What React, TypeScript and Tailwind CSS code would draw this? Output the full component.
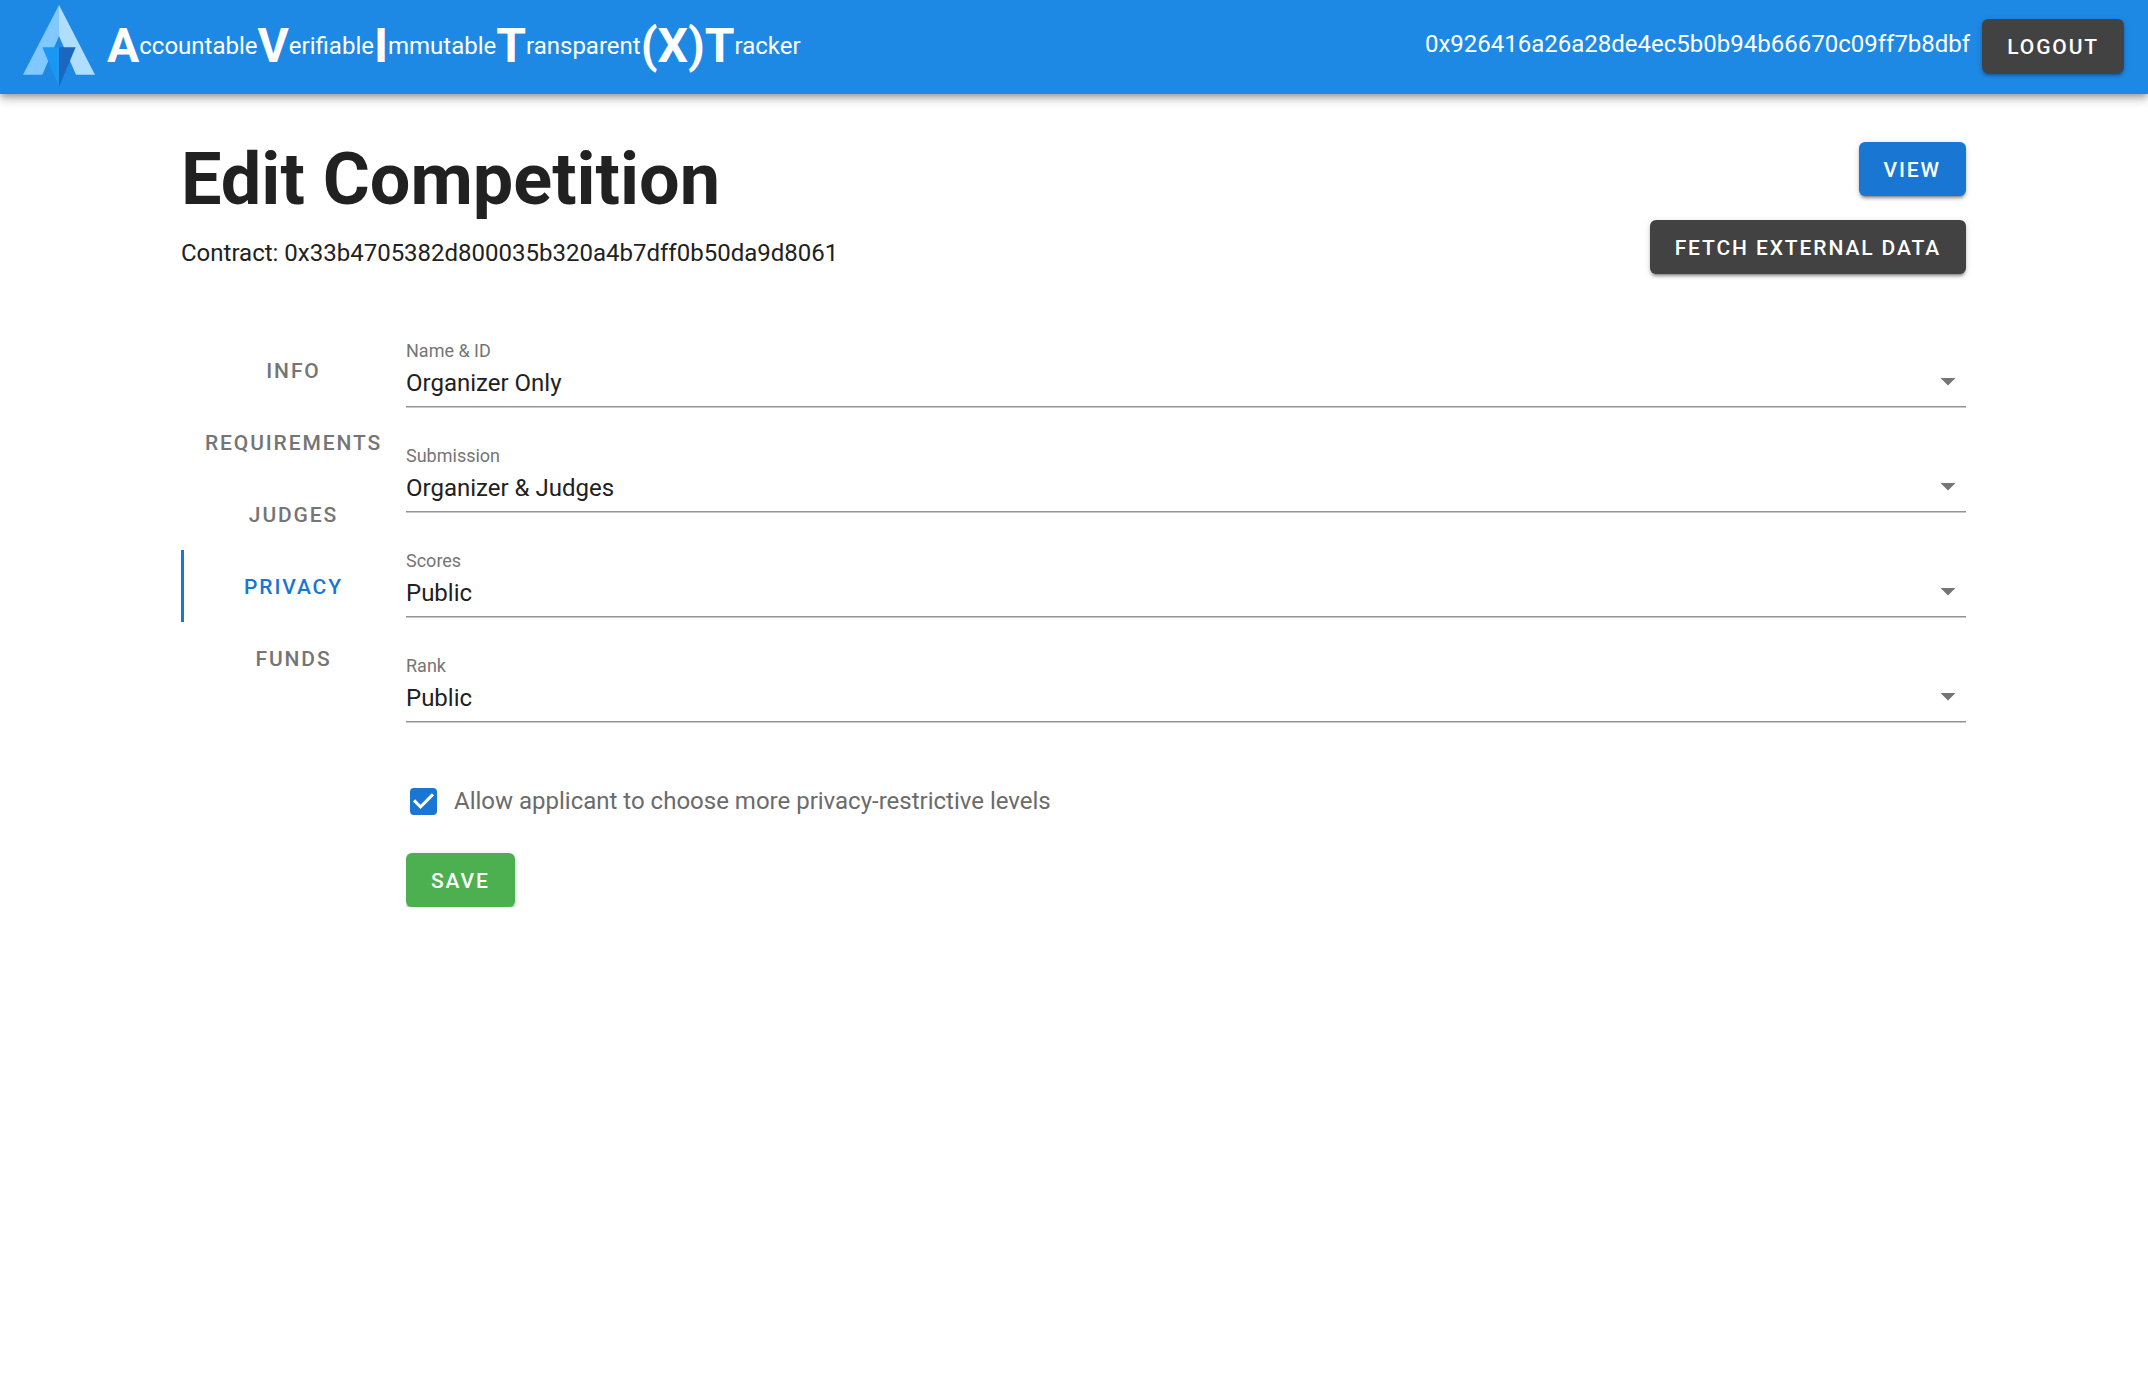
import { useState } from 'react'
import clsx from 'clsx'

const WORDS = [
  { initial: 'A', rest: 'ccountable' },
  { initial: 'V', rest: 'erifiable' },
  { initial: 'I', rest: 'mmutable' },
  { initial: 'T', rest: 'ransparent' },
  { initial: '(X)', rest: '' },
  { initial: 'T', rest: 'racker' },
]

const TABS = ['Info', 'Requirements', 'Judges', 'Privacy', 'Funds']

const LEVELS = ['Public', 'Organizer & Judges', 'Organizer Only']

const FIELDS = [
  { id: 'name', label: 'Name & ID', value: 'Organizer Only' },
  { id: 'submission', label: 'Submission', value: 'Organizer & Judges' },
  { id: 'scores', label: 'Scores', value: 'Public' },
  { id: 'rank', label: 'Rank', value: 'Public' },
]

const Logo = () => (
  <svg className="h-[82px] w-[72px] shrink-0" viewBox="39 15 216 246" aria-hidden="true">
    <path fill="#80c8ff" d="M147 15 39 224h58l50-116z" />
    <path fill="#b0deff" d="M147 15l108 209h-57l-51-116z" />
    <path fill="#1997f5" d="M97 142h50v118z" />
    <path fill="#1967c0" d="M147 142h50l-50 118z" />
  </svg>
)

type ButtonProps = {
  label: string
  className: string
}

const Button = ({ label, className }: ButtonProps) => (
  <button
    type="button"
    className={clsx(
      'h-[54px] rounded-md px-[25px] pt-[3px] text-[21px] font-medium tracking-[0.09em] text-white uppercase whitespace-nowrap shadow-[0_4px_2px_-3px_rgba(0,0,0,0.3),0_3px_3px_rgba(0,0,0,0.2),0_1px_7px_rgba(0,0,0,0.12)]',
      className
    )}
  >
    {label}
  </button>
)

const Header = () => (
  <header className="flex h-[94px] items-center justify-between bg-[#1e88e5] pr-6 pb-[2px] pl-[23px] text-white shadow-[0_3px_6px_-1px_rgba(0,0,0,0.25),0_6px_8px_rgba(0,0,0,0.14),0_1px_15px_rgba(0,0,0,0.12)]">
    <div className="flex items-center gap-3">
      <Logo />
      <div className="flex items-center text-2xl leading-9">
        {WORDS.map(({ initial, rest }, index) => (
          <span key={index} className="flex items-center">
            <b className="text-5xl font-bold">{initial}</b>
            {rest}
          </span>
        ))}
      </div>
    </div>

    <div className="flex items-center gap-3">
      <span className="pb-1 text-2xl">0x926416a26a28de4ec5b0b94b66670c09ff7b8dbf</span>
      <Button label="Logout" className="bg-[#424242]" />
    </div>
  </header>
)

type SelectFieldProps = {
  id: string
  label: string
  value: string
}

const SelectField = ({ id, label, value }: SelectFieldProps) => (
  <div className="flex h-[105px] flex-col">
    <label htmlFor={id} className="text-lg leading-[26px] text-[#757575]">
      {label}
    </label>
    <div className="relative border-b border-[#949494] shadow-[0_1px_0_#c9c9c9]">
      <select id={id} defaultValue={value} className="block h-[42px] w-full appearance-none bg-transparent pb-1 text-2xl text-[#212121]">
        {LEVELS.map(level => (
          <option key={level}>{level}</option>
        ))}
      </select>
      <svg className="pointer-events-none absolute top-[14px] right-[10px] h-2 w-4" viewBox="0 0 16 8" aria-hidden="true">
        <path fill="#757575" d="M.5 0h15L8 7.5z" />
      </svg>
    </div>
  </div>
)

export default function App() {
  const [activeTab, setActiveTab] = useState('Privacy')

  return (
    <div className="min-h-screen bg-white font-[Roboto,sans-serif] text-[#212121]">
      <Header />

      <main className="mx-auto max-w-[1786px] pt-12 pr-px">
        <div className="flex justify-between">
          <div>
            <h1 className="text-7xl leading-[75px] font-bold">Edit Competition</h1>
            <p className="mt-5 text-2xl">Contract: 0x33b4705382d800035b320a4b7dff0b50da9d8061</p>
          </div>
          <div className="flex flex-col items-end gap-6">
            <Button label="View" className="bg-[#1976d2]" />
            <Button label="Fetch External Data" className="bg-[#424242]" />
          </div>
        </div>

        <div className="flex items-start pt-[60px]">
          <nav className="flex w-[225px] shrink-0 flex-col">
            {TABS.map(tab => (
              <button
                key={tab}
                type="button"
                onClick={() => setActiveTab(tab)}
                className={clsx(
                  'h-[72px] border-l-3 pt-[3px] pr-[3px] text-[21px] font-medium tracking-[0.09em] uppercase',
                  tab === activeTab ? 'border-[#1976d2] text-[#1976d2]' : 'border-transparent text-[#757575]'
                )}
              >
                {tab}
              </button>
            ))}
          </nav>

          <form className="flex grow flex-col items-start overflow-hidden pt-1">
            <div className="w-full">
              {FIELDS.map(field => (
                <SelectField key={field.id} {...field} />
              ))}
            </div>

            <label className="mt-[25px] flex items-center gap-[17px] pl-1 text-2xl leading-9 text-[#6b6b6b]">
              <span className="relative flex">
                <input type="checkbox" defaultChecked className="peer size-[27px] appearance-none rounded-sm border-3 border-[#757575] checked:border-[#1976d2] checked:bg-[#1976d2]" />
                <svg className="pointer-events-none absolute inset-0 hidden size-full peer-checked:block" viewBox="3 3 18 18" aria-hidden="true">
                  <path fill="#fff" d="M10 17l-5-5 1.41-1.42L10 14.17l7.59-7.59L19 8z" />
                </svg>
              </span>
              Allow applicant to choose more privacy-restrictive levels
            </label>

            <Button label="Save" className="mt-[34px] bg-[#4caf50]" />
          </form>
        </div>
      </main>
    </div>
  )
}
